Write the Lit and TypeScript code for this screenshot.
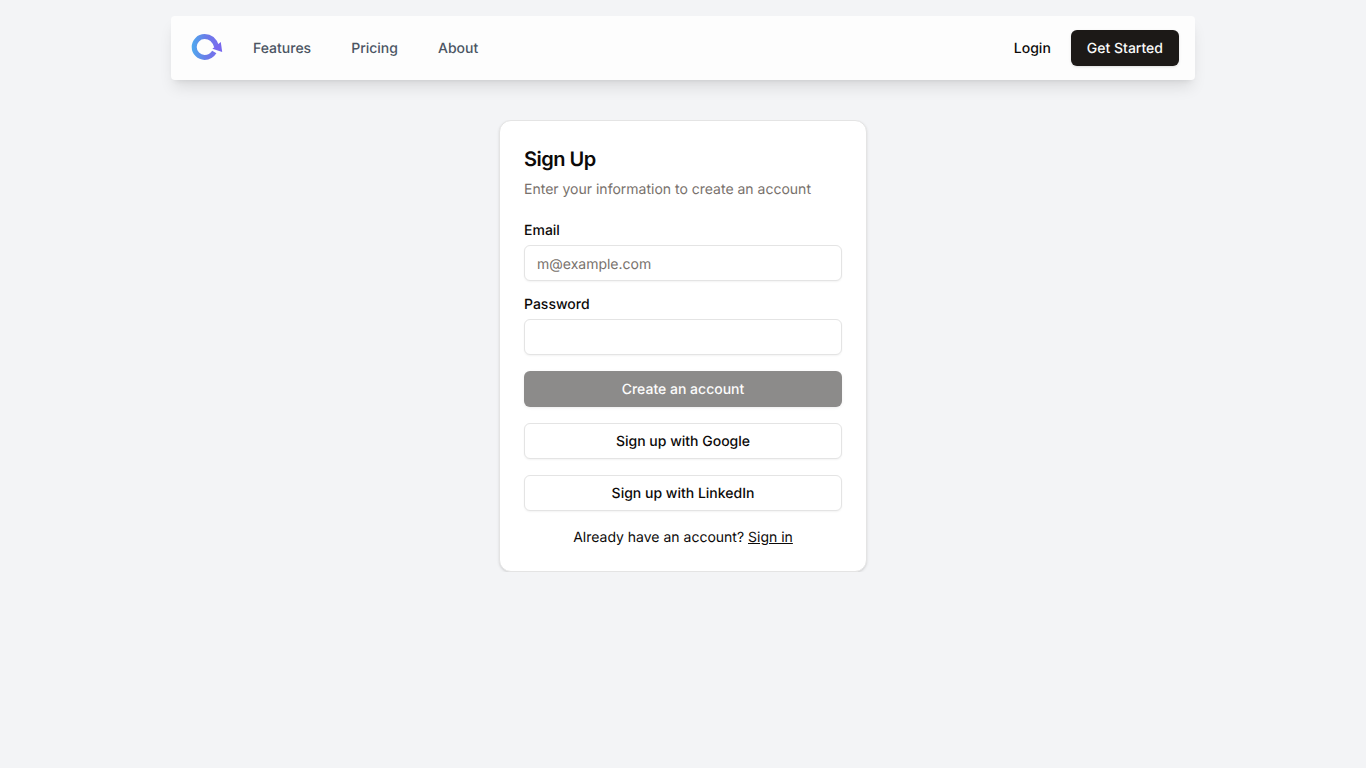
import { LitElement, html, css } from 'lit';
import { customElement, property, state } from 'lit/decorators.js';

@customElement('app-logo')
export class AppLogo extends LitElement {
  static styles = css`
    :host {
      display: block;
      width: 34px;
      height: 30px;
    }

    svg {
      display: block;
    }
  `;

  render() {
    return html`
      <svg width="34" height="30" viewBox="0 0 34 30" fill="none" aria-hidden="true">
        <defs>
          <linearGradient id="ring" x1="2" y1="15" x2="32" y2="15" gradientUnits="userSpaceOnUse">
            <stop offset="0" stop-color="#4fa9ee" />
            <stop offset="0.5" stop-color="#6b7ae8" />
            <stop offset="1" stop-color="#7c6af0" />
          </linearGradient>
        </defs>
        <path
          d="M26.6 14.6C24.6 8.6 20.3 4.6 14.6 4.6A10.4 10.4 0 1 0 14.6 25.4C18.4 25.4 22 23.6 24.3 20"
          stroke="url(#ring)"
          stroke-width="5"
        />
        <path d="M30.8 10L32.2 20L22.4 16.8Z" fill="#7868ee" />
      </svg>
    `;
  }
}

@customElement('nav-bar')
export class NavBar extends LitElement {
  static styles = css`
    :host {
      display: block;
    }

    .nav {
      box-sizing: border-box;
      display: flex;
      align-items: center;
      justify-content: space-between;
      width: 1024px;
      height: 64px;
      margin: 0 auto;
      padding: 0 16px 0 19px;
      border-radius: 4px;
      background: #fdfdfd;
      box-shadow: 0 10px 15px -3px rgb(0 0 0 / 0.1), 0 4px 6px -4px rgb(0 0 0 / 0.1);
    }

    .links,
    .actions {
      display: flex;
      align-items: center;
    }

    .links {
      gap: 40px;
    }

    .logo {
      margin-right: -11px;
      margin-bottom: 2px;
    }

    .actions {
      gap: 20px;
    }

    a {
      padding-top: 2px;
      font-size: 14px;
      font-weight: 500;
      line-height: 20px;
      color: #4b5563;
      text-decoration: none;
    }

    .login {
      color: #0c0a09;
    }

    .start {
      padding: 9px 16px 7px;
      border-radius: 6px;
      background: #1c1917;
      color: #fafaf9;
      box-shadow: 0 1px 3px 0 rgb(0 0 0 / 0.1), 0 1px 2px -1px rgb(0 0 0 / 0.1);
    }
  `;

  @property({ type: Array })
  items = ['Features', 'Pricing', 'About'];

  render() {
    return html`
      <nav class="nav">
        <div class="links">
          <app-logo class="logo"></app-logo>
          ${this.items.map((item) => html`<a href="#">${item}</a>`)}
        </div>
        <div class="actions">
          <a class="login" href="#">Login</a>
          <a class="start" href="#">Get Started</a>
        </div>
      </nav>
    `;
  }
}

@customElement('sign-up-card')
export class SignUpCard extends LitElement {
  static styles = css`
    :host {
      display: block;
      padding: 0 1px;
      overflow: hidden;
    }

    .card {
      box-sizing: border-box;
      width: 368px;
      margin: 0 auto;
      padding: 24px;
      border: 1px solid #e4e4e4;
      border-radius: 12px;
      background: #fff;
      color: #0c0a09;
      font-size: 14px;
      line-height: 20px;
      box-shadow: 0 1px 3px 0 rgb(0 0 0 / 0.1), 0 1px 2px -1px rgb(0 0 0 / 0.1);
    }

    .header {
      display: flex;
      flex-direction: column;
      gap: 7px;
      margin-bottom: 24px;
    }

    .title {
      margin: 0;
      font-size: 20px;
      font-weight: 600;
      line-height: 28px;
      letter-spacing: -0.025em;
    }

    .description {
      margin: 0 0 -1px;
      color: #78716c;
    }

    .form,
    .field {
      display: grid;
      gap: 16px;
    }

    .field {
      gap: 8px;
    }

    .label {
      margin-bottom: -1px;
      padding-top: 1px;
      font-weight: 500;
      line-height: 14px;
    }

    .input,
    .button {
      box-sizing: border-box;
      width: 100%;
      height: 36px;
      margin: 0;
      border: 1px solid #e4e4e4;
      border-radius: 6px;
      background: #fff;
      color: inherit;
      font: inherit;
      text-rendering: inherit;
      box-shadow: 0 1px 2px 0 rgb(0 0 0 / 0.05);
    }

    .input {
      padding: 5px 12px 3px;
    }

    .input::placeholder {
      color: #78716c;
    }

    .button {
      padding: 2px 16px 0;
      font-weight: 500;
    }

    .primary {
      border: none;
      background: #1c1917;
      color: #fafaf9;
      box-shadow: 0 1px 3px 0 rgb(0 0 0 / 0.1), 0 1px 2px -1px rgb(0 0 0 / 0.1);
    }

    .primary:disabled {
      opacity: 0.5;
    }

    .footer {
      margin: 17px 0 -1px;
      text-align: center;
    }

    .footer a {
      color: inherit;
      text-decoration: underline;
    }
  `;

  @state()
  private email = '';

  @state()
  private password = '';

  private onEmail(e: Event) {
    this.email = (e.target as HTMLInputElement).value;
  }

  private onPassword(e: Event) {
    this.password = (e.target as HTMLInputElement).value;
  }

  render() {
    return html`
      <section class="card">
        <div class="header">
          <h1 class="title">Sign Up</h1>
          <p class="description">Enter your information to create an account</p>
        </div>
        <div class="form">
          <div class="field">
            <label class="label" for="email">Email</label>
            <input
              class="input"
              id="email"
              type="email"
              placeholder="m@example.com"
              .value=${this.email}
              @input=${this.onEmail}
            />
          </div>
          <div class="field">
            <label class="label" for="password">Password</label>
            <input
              class="input"
              id="password"
              type="password"
              .value=${this.password}
              @input=${this.onPassword}
            />
          </div>
          <button class="button primary" ?disabled=${!this.email || !this.password}>
            Create an account
          </button>
          <button class="button">Sign up with Google</button>
          <button class="button">Sign up with LinkedIn</button>
        </div>
        <p class="footer">Already have an account? <a href="#">Sign in</a></p>
      </section>
    `;
  }
}

@customElement('app-root')
export class AppRoot extends LitElement {
  static styles = css`
    :host {
      box-sizing: border-box;
      display: flex;
      flex-direction: column;
      gap: 40px;
      min-height: 100vh;
      padding-top: 16px;
      background: #f3f4f6;
      font-family: Inter, 'Liberation Sans', sans-serif;
      text-rendering: geometricPrecision;
    }
  `;

  render() {
    return html`
      <nav-bar></nav-bar>
      <sign-up-card></sign-up-card>
    `;
  }
}

declare global {
  interface HTMLElementTagNameMap {
    'app-logo': AppLogo;
    'nav-bar': NavBar;
    'sign-up-card': SignUpCard;
    'app-root': AppRoot;
  }
}
